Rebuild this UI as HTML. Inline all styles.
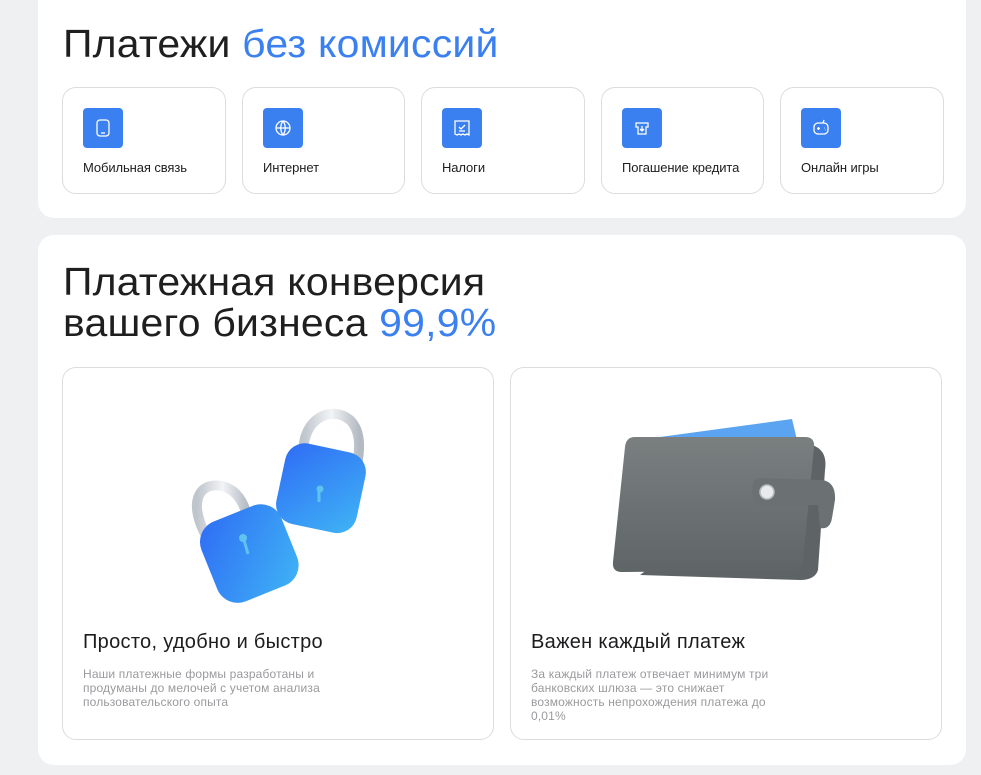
<!DOCTYPE html>
<html><head><meta charset="utf-8"><style>
*{margin:0;padding:0;box-sizing:border-box}
body{width:981px;height:775px;background:#eff0f2;position:relative;overflow:hidden;font-family:"Liberation Sans",sans-serif;color:#1d1d1f}
.card{position:absolute;background:#fff;border-radius:16px}
.h{position:absolute;font-size:39px;font-weight:400;letter-spacing:0.2px;line-height:41px;color:#1f1f1f;transform:scaleX(1.05);transform-origin:0 0;white-space:nowrap}
.b{color:#3b80f0}
.tile{position:absolute;top:87px;height:107px;border:1px solid #dcdcdf;border-radius:14px;background:#fff}
.ic{position:absolute;left:20px;top:20px;width:40px;height:40px;background:#3b80f0;border-radius:4px}
.ic svg{position:absolute;left:0;top:0}
.tl{position:absolute;left:20px;top:72px;font-size:13px;color:#1d1d1f;letter-spacing:-0.1px}
.big{position:absolute;top:367px;height:373px;width:432px;border:1px solid #dcdcdf;border-radius:14px;background:#fff}
.bt{position:absolute;left:20px;top:263px;font-size:20px;color:#1d1d1f;letter-spacing:0.3px}
.bd{position:absolute;left:20px;top:299px;font-size:12px;line-height:14px;color:#9a9a9e;letter-spacing:0.15px}
</style></head><body>
<div class="card" style="left:38px;top:-20px;width:928px;height:238px"></div>
<div class="card" style="left:38px;top:235px;width:928px;height:530px"></div>
<div class="h" style="left:63px;top:24px">Платежи <span class="b">без комиссий</span></div>

<div class="tile" style="left:62px;width:164px"><div class="ic"><svg width="40" height="40" fill="none" stroke="#fff" stroke-width="1.3"><rect x="14" y="12" width="12" height="16" rx="3"/><path d="M18 25h4"/></svg></div><div class="tl">Мобильная связь</div></div>
<div class="tile" style="left:242px;width:163px"><div class="ic"><svg width="40" height="40" fill="none" stroke="#fff" stroke-width="1.3"><circle cx="20" cy="20" r="7"/><path d="M13 20h14M20 13c-3 4-3 10 0 14M20 13c3 4 3 10 0 14"/></svg></div><div class="tl">Интернет</div></div>
<div class="tile" style="left:421px;width:164px"><div class="ic"><svg width="40" height="40" fill="none" stroke="#fff" stroke-width="1.3"><path d="M13 13h14v14l-2-1-2 1-2-1-2 1-2-1-2 1-2-1z"/><path d="M17 19l2 2 4-4M17 23h6"/></svg></div><div class="tl">Налоги</div></div>
<div class="tile" style="left:601px;width:163px"><div class="ic"><svg width="40" height="40" fill="none" stroke="#fff" stroke-width="1.3"><path d="M14 15h12v4h-2v7h-8v-7h-2z"/><path d="M20 18v5M18 21l2 2 2-2"/></svg></div><div class="tl">Погашение кредита</div></div>
<div class="tile" style="left:780px;width:164px"><div class="ic"><svg width="40" height="40" fill="none" stroke="#fff" stroke-width="1.3"><rect x="13" y="15" width="14" height="11" rx="4"/><path d="M22 15l1-3M16 20.5h3M17.5 19v3M23 20h.5M24 22h.5"/></svg></div><div class="tl">Онлайн игры</div></div>

<div class="h" style="left:63px;top:262px">Платежная конверсия<br>вашего бизнеса <span class="b">99,9%</span></div>

<div class="big" style="left:62px"><div class="bt">Просто, удобно и быстро</div><div class="bd">Наши платежные формы разработаны и<br>продуманы до мелочей с учетом анализа<br>пользовательского опыта</div></div>
<div class="big" style="left:510px"><div class="bt">Важен каждый платеж</div><div class="bd">За каждый платеж отвечает минимум три<br>банковских шлюза — это снижает<br>возможность непрохождения платежа до<br>0,01%</div></div>

<svg style="position:absolute;left:0;top:0" width="981" height="775">
<defs>
<linearGradient id="lg" x1="0" y1="0" x2="1" y2="1"><stop offset="0" stop-color="#2f6cf5"/><stop offset="1" stop-color="#3fb4f5"/></linearGradient>
<linearGradient id="wg" x1="0" y1="0" x2="0" y2="1"><stop offset="0" stop-color="#7a7f80"/><stop offset="1" stop-color="#5f6566"/></linearGradient>
<linearGradient id="sg" x1="0" y1="0" x2="1" y2="0"><stop offset="0" stop-color="#bfc5cc"/><stop offset=".5" stop-color="#f2f4f6"/><stop offset="1" stop-color="#b3bac2"/></linearGradient>
</defs>
<path d="M304 462 C298 420 330 404 350 420 C362 432 360 452 356 470" fill="none" stroke="url(#sg)" stroke-width="10" stroke-linecap="round"/>
<g transform="rotate(12 320 488)"><rect x="280" y="447" width="82" height="82" rx="20" fill="url(#lg)"/></g>
<path d="M319 490 v12" stroke="#5fc3f0" stroke-width="3"/><circle cx="320" cy="489" r="3.5" fill="#5fc3f0"/>
<path d="M205 534 C188 500 200 482 222 486 C238 490 245 505 248 520" fill="none" stroke="url(#sg)" stroke-width="10" stroke-linecap="round"/>
<g transform="rotate(-22 248 553)"><rect x="206" y="511" width="86" height="86" rx="22" fill="url(#lg)"/></g>
<path d="M244 540 l4 14" stroke="#5fc3f0" stroke-width="3"/><circle cx="243" cy="538" r="4" fill="#5fc3f0"/>
<path d="M660 437 L792 419 L797 440 Z" fill="#5ba4f2"/>
<path d="M640 565 L805 572 L815 455 L812 448 L802 448 L793 560 L640 560 Z" fill="#4ab5e8"/>
<path d="M812 445 Q828 450 825 470 L818 570 Q815 580 800 580 L640 575 Z" fill="#5e6465"/>
<path d="M635 437 L805 437 Q815 437 814 447 L803 560 Q802 570 792 570 L622 572 Q612 572 613 562 L625 447 Q626 437 635 437Z" fill="url(#wg)"/>
<path d="M760 478 L822 480 Q836 482 835 500 L832 518 Q830 530 820 528 L818 505 L762 506 Q752 505 752 492 Q752 478 760 478Z" fill="#6b7172"/>
<circle cx="767" cy="492" r="7" fill="#e8eaec" stroke="#b8bcbf" stroke-width="1.5"/>
</svg>
</body></html>
